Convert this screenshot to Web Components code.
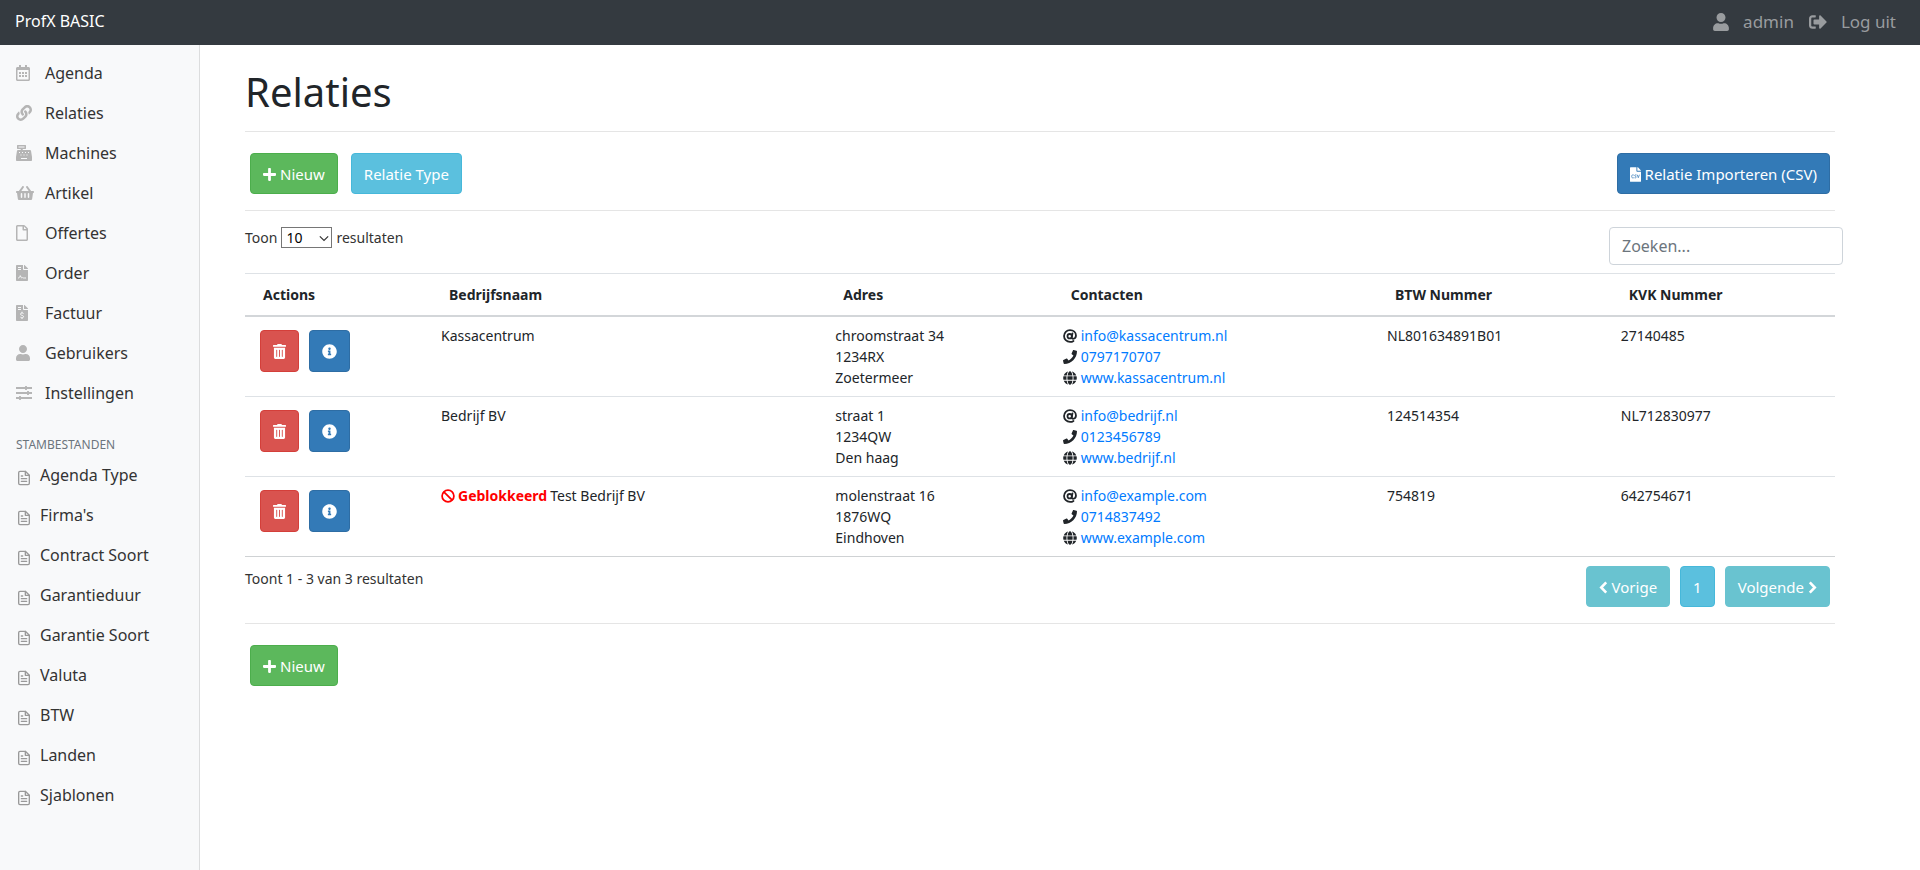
<!DOCTYPE html>
<html lang="nl">
<head>
<meta charset="utf-8">
<meta name="viewport" content="width=device-width, initial-scale=1">
<title>Relaties - ProfX BASIC</title>
<style>
  html, body { margin: 0; min-height: 100%; }
  body { font-family: "Noto Sans", "Open Sans", sans-serif; font-size: 14px; line-height: 21px; color: #212529; background: #fff; }
</style>
</head>
<body>
<px-shell>
  <px-navbar slot="top" brand="ProfX BASIC"></px-navbar>
  <px-sidebar slot="side">
    <px-nav-item icon="calendar">Agenda</px-nav-item>
    <px-nav-item icon="link">Relaties</px-nav-item>
    <px-nav-item icon="register">Machines</px-nav-item>
    <px-nav-item icon="basket">Artikel</px-nav-item>
    <px-nav-item icon="file">Offertes</px-nav-item>
    <px-nav-item icon="contract">Order</px-nav-item>
    <px-nav-item icon="invoice">Factuur</px-nav-item>
    <px-nav-item icon="user">Gebruikers</px-nav-item>
    <px-nav-item icon="sliders">Instellingen</px-nav-item>
    <px-nav-heading>STAMBESTANDEN</px-nav-heading>
    <px-nav-item icon="doc">Agenda Type</px-nav-item>
    <px-nav-item icon="doc">Firma's</px-nav-item>
    <px-nav-item icon="doc">Contract Soort</px-nav-item>
    <px-nav-item icon="doc">Garantieduur</px-nav-item>
    <px-nav-item icon="doc">Garantie Soort</px-nav-item>
    <px-nav-item icon="doc">Valuta</px-nav-item>
    <px-nav-item icon="doc">BTW</px-nav-item>
    <px-nav-item icon="doc">Landen</px-nav-item>
    <px-nav-item icon="doc">Sjablonen</px-nav-item>
  </px-sidebar>
  <px-title>Relaties</px-title>
  <px-toolbar>
    <px-button tone="success" icon="plus">Nieuw</px-button>
    <px-button tone="info">Relatie Type</px-button>
    <px-button slot="end" tone="primary" icon="csv">Relatie Importeren (CSV)</px-button>
  </px-toolbar>
  <px-table-controls></px-table-controls>
  <px-relations></px-relations>
  <px-pager>Toont 1 - 3 van 3 resultaten</px-pager>
  <px-toolbar last>
    <px-button tone="success" icon="plus">Nieuw</px-button>
  </px-toolbar>
</px-shell>

<script>
const sheet = 'M224 136V0H24C10.7 0 0 10.7 0 24v464c0 13.3 10.7 24 24 24h336c13.3 0 24-10.7 24-24V160H248c-13.2 0-24-10.8-24-24zm160-14.1v6.1H256V0h6.1c6.4 0 12.5 2.5 17 7l97.9 98c4.5 4.5 7 10.6 7 16.9z';
const key = (x, y) => `M${x} ${y}h32v32h-32z`;

// Each icon: [viewBox width, viewBox height, markup]
const ICONS = {
  user: [448, 512, '<path d="M224 256c70.7 0 128-57.3 128-128S294.7 0 224 0 96 57.3 96 128s57.3 128 128 128zm89.6 32h-16.7c-22.2 10.2-46.9 16-72.9 16s-50.6-5.8-72.9-16h-16.7C60.2 288 0 348.2 0 422.4V464c0 26.5 21.5 48 48 48h352c26.5 0 48-21.5 48-48v-41.6c0-74.2-60.2-134.4-134.4-134.4z"/>'],
  calendar: [448, 512, '<path d="M148 288h-40c-6.6 0-12-5.4-12-12v-40c0-6.6 5.4-12 12-12h40c6.6 0 12 5.4 12 12v40c0 6.6-5.4 12-12 12zm108-12v-40c0-6.6-5.4-12-12-12h-40c-6.6 0-12 5.4-12 12v40c0 6.6 5.4 12 12 12h40c6.6 0 12-5.4 12-12zm96 0v-40c0-6.6-5.4-12-12-12h-40c-6.6 0-12 5.4-12 12v40c0 6.6 5.4 12 12 12h40c6.6 0 12-5.4 12-12zm-96 96v-40c0-6.6-5.4-12-12-12h-40c-6.6 0-12 5.4-12 12v40c0 6.6 5.4 12 12 12h40c6.6 0 12-5.4 12-12zm-96 0v-40c0-6.6-5.4-12-12-12h-40c-6.6 0-12 5.4-12 12v40c0 6.6 5.4 12 12 12h40c6.6 0 12-5.4 12-12zm192 0v-40c0-6.6-5.4-12-12-12h-40c-6.6 0-12 5.4-12 12v40c0 6.6 5.4 12 12 12h40c6.6 0 12-5.4 12-12zm96-260v352c0 26.5-21.5 48-48 48H48c-26.5 0-48-21.5-48-48V112c0-26.5 21.5-48 48-48h48V12c0-6.6 5.4-12 12-12h40c6.6 0 12 5.4 12 12v52h128V12c0-6.6 5.4-12 12-12h40c6.6 0 12 5.4 12 12v52h48c26.5 0 48 21.5 48 48zm-48 346V160H48v298c0 3.3 2.7 6 6 6h340c3.3 0 6-2.7 6-6z"/>'],
  link: [512, 512, '<path d="M326.612 185.391c59.747 59.809 58.927 155.698.36 214.59-.11.12-.24.25-.36.37l-67.2 67.2c-59.27 59.27-155.699 59.262-214.96 0-59.27-59.26-59.27-155.7 0-214.96l37.106-37.106c9.84-9.84 26.786-3.3 27.294 10.606.648 17.722 3.826 35.527 9.69 52.721 1.986 5.822.567 12.262-3.783 16.612l-13.087 13.087c-28.026 28.026-28.905 73.66-1.155 101.96 28.024 28.579 74.086 28.749 102.325.51l67.2-67.19c28.191-28.191 28.073-73.757 0-101.83-3.701-3.694-7.429-6.564-10.341-8.569a16.037 16.037 0 0 1-6.947-12.606c-.396-10.567 3.348-21.456 11.698-29.806l21.054-21.055c5.521-5.521 14.182-6.199 20.584-1.731a152.482 152.482 0 0 1 20.522 17.197zM467.547 44.449c-59.261-59.262-155.69-59.27-214.96 0l-67.2 67.2c-.12.12-.25.25-.36.37-58.566 58.892-59.387 154.781.36 214.59a152.454 152.454 0 0 0 20.521 17.196c6.402 4.468 15.064 3.789 20.584-1.731l21.054-21.055c8.35-8.35 12.094-19.239 11.698-29.806a16.037 16.037 0 0 0-6.947-12.606c-2.912-2.005-6.64-4.875-10.341-8.569-28.073-28.073-28.191-73.639 0-101.83l67.2-67.19c28.239-28.239 74.3-28.069 102.325.51 27.75 28.3 26.872 73.934-1.155 101.96l-13.087 13.087c-4.35 4.35-5.769 10.79-3.783 16.612 5.864 17.194 9.042 34.999 9.69 52.721.509 13.906 17.454 20.446 27.294 10.606l37.106-37.106c59.271-59.259 59.271-155.699.001-214.959z"/>'],
  register: [512, 512, `<path fill-rule="evenodd" d="M48 0h256c9 0 16 7 16 16v96c0 9-7 16-16 16h-88v32h232c16 0 29 12 32 27l31 192c1 5 1 9 1 13v88c0 18-14 32-32 32H32c-18 0-32-14-32-32v-88c0-4 0-8 1-13l31-192c3-15 16-27 32-27h88v-32H48c-9 0-16-7-16-16V16C32 7 39 0 48 0zM80 48v32h192V48zM160 416v32h192v-32z${key(96,224)}${key(192,224)}${key(288,224)}${key(384,224)}${key(144,304)}${key(240,304)}${key(336,304)}"/>`],
  basket: [576, 512, '<path d="M576 216v16c0 13.255-10.745 24-24 24h-8l-26.113 182.788C514.509 462.435 494.257 480 470.37 480H105.63c-23.887 0-44.139-17.565-47.518-41.212L32 256h-8c-13.255 0-24-10.745-24-24v-16c0-13.255 10.745-24 24-24h67.341l106.78-146.821c10.395-14.292 30.407-17.453 44.701-7.058 14.293 10.395 17.453 30.408 7.058 44.701L170.477 192h235.046L326.12 82.821c-10.395-14.292-7.234-34.306 7.059-44.701 14.291-10.395 34.306-7.235 44.701 7.058L484.659 192H552c13.255 0 24 10.745 24 24zM312 392V280c0-13.255-10.745-24-24-24s-24 10.745-24 24v112c0 13.255 10.745 24 24 24s24-10.745 24-24zm112 0V280c0-13.255-10.745-24-24-24s-24 10.745-24 24v112c0 13.255 10.745 24 24 24s24-10.745 24-24zm-224 0V280c0-13.255-10.745-24-24-24s-24 10.745-24 24v112c0 13.255 10.745 24 24 24s24-10.745 24-24z"/>'],
  file: [384, 512, '<path d="M369.9 97.9L286 14C277 5 264.8-.1 252.1-.1H48C21.5 0 0 21.5 0 48v416c0 26.5 21.5 48 48 48h288c26.5 0 48-21.5 48-48V131.9c0-12.7-5.1-25-14.1-34zM332.1 128H256V51.9l76.1 76.1zM48 464V48h160v104c0 13.3 10.7 24 24 24h104v288H48z"/>'],
  contract: [384, 512, `<path d="${sheet}"/><g fill="none" stroke="var(--cut)" stroke-width="32"><path d="M64 80h96M64 144h96M64 416c40 0 54-20 72-76l36 68c14 16 30-14 44 0 8 8 20 8 104 8"/></g>`],
  invoice: [384, 512, `<path d="${sheet}"/><g fill="none" stroke="var(--cut)" stroke-width="32"><path d="M64 80h96M64 144h96M192 216v40M192 408v40M242 276c-16-16-36-20-56-20-54 0-54 60-8 72l30 8c48 14 44 72-10 72-24 0-40-6-56-18"/></g>`],
  csv: [384, 512, `<path d="${sheet}"/><g fill="none" stroke="var(--cut)" stroke-width="26"><path d="M132 274c-60-16-74 8-74 48s16 66 74 48M226 274c-70-22-80 34-32 46s22 68-38 50M252 264l38 104 38-104"/></g>`],
  sliders: [512, 512, '<path d="M0 64h288V48c0-9 7-16 16-16h32c9 0 16 7 16 16v16h160v64H352v16c0 9-7 16-16 16h-32c-9 0-16-7-16-16v-16H0zM0 224h352v-16c0-9 7-16 16-16h32c9 0 16 7 16 16v16h96v64h-96v16c0 9-7 16-16 16h-32c-9 0-16-7-16-16v-16H0zM0 384h96v-16c0-9 7-16 16-16h32c9 0 16 7 16 16v16h352v64H160v16c0 9-7 16-16 16h-32c-9 0-16-7-16-16v-16H0z"/>'],
  doc: [24, 24, '<g fill="none" stroke="currentColor" stroke-width="2" stroke-linecap="round" stroke-linejoin="round"><path d="M14 2H6a2 2 0 0 0-2 2v16a2 2 0 0 0 2 2h12a2 2 0 0 0 2-2V8z"/><path d="M14 2v6h6M16 13H8M16 17H8M10 9H8"/></g>'],
  signout: [512, 512, '<path d="M497 273L329 441c-15 15-41 4.5-41-17v-96H152c-13.3 0-24-10.7-24-24v-96c0-13.3 10.7-24 24-24h136V88c0-21.4 25.9-32 41-17l168 168c9.3 9.4 9.3 24.6 0 34zM192 436v-40c0-6.6-5.4-12-12-12H96c-17.7 0-32-14.3-32-32V160c0-17.7 14.3-32 32-32h84c6.6 0 12-5.4 12-12V76c0-6.6-5.4-12-12-12H96c-53 0-96 43-96 96v192c0 53 43 96 96 96h84c6.6 0 12-5.4 12-12z"/>'],
  plus: [448, 512, '<path d="M416 208H272V64c0-17.67-14.33-32-32-32h-32c-17.67 0-32 14.33-32 32v144H32c-17.67 0-32 14.33-32 32v32c0 17.67 14.33 32 32 32h144v144c0 17.67 14.33 32 32 32h32c17.67 0 32-14.33 32-32V304h144c17.67 0 32-14.33 32-32v-32c0-17.67-14.33-32-32-32z"/>'],
  trash: [448, 512, '<path d="M32 464a48 48 0 0 0 48 48h288a48 48 0 0 0 48-48V128H32zm272-256a16 16 0 0 1 32 0v224a16 16 0 0 1-32 0zm-96 0a16 16 0 0 1 32 0v224a16 16 0 0 1-32 0zm-96 0a16 16 0 0 1 32 0v224a16 16 0 0 1-32 0zM432 32H312l-9.4-18.7A24 24 0 0 0 281.1 0H166.8a23.72 23.72 0 0 0-21.4 13.3L136 32H16A16 16 0 0 0 0 48v32a16 16 0 0 0 16 16h416a16 16 0 0 0 16-16V48a16 16 0 0 0-16-16z"/>'],
  info: [512, 512, '<path d="M256 8C119.043 8 8 119.083 8 256c0 136.997 111.043 248 248 248s248-111.003 248-248C504 119.083 392.957 8 256 8zm0 110c23.196 0 42 18.804 42 42s-18.804 42-42 42-42-18.804-42-42 18.804-42 42-42zm56 254c0 6.627-5.373 12-12 12h-88c-6.627 0-12-5.373-12-12v-24c0-6.627 5.373-12 12-12h12v-64h-12c-6.627 0-12-5.373-12-12v-24c0-6.627 5.373-12 12-12h64c6.627 0 12 5.373 12 12v100h12c6.627 0 12 5.373 12 12v24z"/>'],
  ban: [512, 512, '<g fill="none" stroke="currentColor" stroke-width="64"><circle cx="256" cy="256" r="216"/><path d="M103 103l306 306"/></g>'],
  at: [512, 512, '<g fill="none" stroke="currentColor" stroke-width="66" stroke-linecap="round"><circle cx="244" cy="262" r="80"/><path d="M346 160l-26 140c-8 44 20 58 48 58 60 0 106-44 106-118C474 120 384 38 256 38 134 38 38 134 38 256s96 218 218 218c48 0 92-14 128-38"/></g>'],
  phone: [512, 512, '<path d="M493.4 24.6l-104-24c-11.3-2.6-22.9 3.3-27.5 13.9l-48 112c-4.2 9.8-1.4 21.3 6.9 28l60.6 49.6c-36 76.7-98.9 140.5-177.2 177.2l-49.6-60.6c-6.8-8.3-18.2-11.1-28-6.9l-112 48C3.9 366.5-2 378.1.6 389.4l24 104C27.1 504.2 36.7 512 48 512c256.1 0 464-207.5 464-464 0-11.2-7.7-20.9-18.6-23.4z"/>'],
  globe: [496, 512, '<path d="M336.5 160C322 70.7 287.8 8 248 8s-74 62.7-88.5 152h177zM152 256c0 22.2 1.2 43.5 3.3 64h185.3c2.1-20.5 3.3-41.8 3.3-64s-1.2-43.5-3.3-64H155.3c-2.1 20.5-3.3 41.8-3.3 64zm324.7-96c-28.6-67.9-86.5-120.4-158-141.6 24.4 33.8 41.2 84.7 50 141.6h108zM177.2 18.4C105.8 39.6 47.8 92.1 19.3 160h108c8.7-56.9 25.5-107.8 49.9-141.6zM487.4 192H372.7c2.1 21 3.3 42.5 3.3 64s-1.2 43-3.3 64h114.6c5.5-20.5 8.6-41.8 8.6-64s-3.1-43.5-8.5-64zM120 256c0-21.5 1.2-43 3.3-64H8.6C3.2 212.5 0 233.8 0 256s3.2 43.5 8.6 64h114.6c-2-21-3.2-42.5-3.2-64zm39.5 96c14.5 89.3 48.7 152 88.5 152s74-62.7 88.5-152h-177zm159.3 141.6c71.4-21.2 129.4-73.7 158-141.6h-108c-8.8 56.9-25.6 107.8-50 141.6zM19.3 352c28.6 67.9 86.5 120.4 158 141.6-24.4-33.8-41.2-84.7-50-141.6h-108z"/>'],
  left: [320, 512, '<path d="M256 76L80 256l176 180" fill="none" stroke="currentColor" stroke-width="92"/>'],
  right: [320, 512, '<path d="M64 76l176 180L64 436" fill="none" stroke="currentColor" stroke-width="92"/>'],
  caret: [12, 12, '<path d="M1 4l5 5 5-5" fill="none" stroke="currentColor" stroke-width="1.4"/>']
};

function define(name, render) {
  customElements.define(name, class extends HTMLElement {
    connectedCallback() {
      if (this.shadowRoot) return;
      const t = document.createElement('template');
      t.innerHTML = render(this);
      this.attachShadow({ mode: 'open' }).append(t.content.cloneNode(true));
    }
  });
}

define('px-icon', el => {
  const [w, h, body] = ICONS[el.getAttribute('name')];
  const size = Number(el.getAttribute('size') || 16);
  return `<style>
    :host { display: inline-flex; flex: none; }
    svg { display: block; fill: currentColor; }
  </style>
  <svg width="${Math.round(size * w / h)}" height="${size}" viewBox="0 0 ${w} ${h}" aria-hidden="true">${body}</svg>`;
});

define('px-shell', () => `<style>
    :host { display: flex; flex-direction: column; min-height: 100vh; }
    .body { display: flex; flex: 1; }
    main { flex: 1; min-width: 0; padding: 23px 85px 24px 45px; }
  </style>
  <slot name="top"></slot>
  <div class="body"><slot name="side"></slot><main><slot></slot></main></div>`);

define('px-navbar', el => `<style>
    :host { display: block; background: #343a40; }
    nav { display: flex; align-items: center; justify-content: space-between; height: 45px; padding: 0 24px 0 15px; }
    a { text-decoration: none; line-height: 24px; }
    .brand { color: #fff; font-size: 16px; padding-bottom: 4px; }
    .user { display: flex; align-items: center; gap: 15px; font-size: 17px; padding-bottom: 2px; }
    .user a { display: flex; align-items: center; gap: 14px; color: #999c9f; }
  </style>
  <nav aria-label="Account">
    <a class="brand" href="#">${el.getAttribute('brand')}</a>
    <div class="user">
      <a href="#"><px-icon name="user" size="18"></px-icon>admin</a>
      <a href="#"><px-icon name="signout" size="18"></px-icon>Log uit</a>
    </div>
  </nav>`);

define('px-sidebar', () => `<style>
    :host { display: block; box-sizing: border-box; flex: 0 0 200px; padding: 8px 0; background: #f8f9fa; border-right: 1px solid #dcddde; --cut: #f8f9fa; }
  </style>
  <nav aria-label="Menu"><slot></slot></nav>`);

define('px-nav-item', el => {
  const doc = el.getAttribute('icon') === 'doc';
  return `<style>
    :host { display: block; }
    a { display: flex; align-items: center; height: 40px; padding: 0 16px; box-sizing: border-box; color: #333; font-size: 16px; line-height: 24px; text-decoration: none; }
    .mark { display: flex; width: ${doc ? 24 : 29}px; color: ${doc ? '#999; padding-top: 6px' : '#b5b5b5'}; }
  </style>
  <a href="#"><span class="mark"><px-icon name="${el.getAttribute('icon')}"></px-icon></span><slot></slot></a>`;
});

define('px-nav-heading', () => `<style>
    :host { display: block; padding: 22px 16px 1px; color: #6c757d; font-size: 12px; line-height: 19px; }
    h2 { margin: 0; font: inherit; }
  </style><h2><slot></slot></h2>`);

define('px-title', () => `<style>
    :host { display: block; padding-bottom: 15px; border-bottom: 1px solid #e5e5e5; }
    h1 { margin: 0; font-size: 40px; line-height: 48px; font-weight: 400; }
  </style><h1><slot></slot></h1>`);

define('px-toolbar', () => `<style>
    :host { display: flex; justify-content: space-between; padding: 21px 5px 16px; border-bottom: 1px solid #e5e5e5; }
    :host([last]) { border: 0; }
    div { display: flex; gap: 13px; }
  </style><div><slot></slot></div><div><slot name="end"></slot></div>`);

define('px-button', el => {
  const icon = el.getAttribute('icon'), after = el.getAttribute('icon-after');
  const [bg, edge] = {
    success: ['#5cb85c', '#4cae4c'], info: ['#5bc0de', '#46b8da'], primary: ['#337ab7', '#2e6da4'],
    danger: ['#d9534f', '#d43f3a'], muted: ['#69c3d0', '#69c3d0']
  }[el.getAttribute('tone')];
  const label = el.getAttribute('label');
  return `<style>
    :host { display: inline-block; --cut: ${bg}; }
    button { display: flex; align-items: center; gap: 4px; margin: 0; padding: ${label ? '8px 12px' : '9px 12px 7px'}; font-family: inherit; font-size: 15px; line-height: ${label ? 24 : 23}px; min-height: ${label ? 42 : 41}px; color: #fff; background: ${bg}; border: 1px solid ${edge}; border-radius: 4px; cursor: pointer; }
  </style>
  <button type="button"${label ? ` aria-label="${label}"` : ''}>${icon ? `<px-icon name="${icon}" size="15"></px-icon>` : ''}<slot></slot>${after ? `<px-icon name="${after}" size="15"></px-icon>` : ''}</button>`;
});

define('px-table-controls', () => `<style>
    :host { display: flex; justify-content: space-between; align-items: flex-start; padding: 16px 0 8px; color: #333; }
    label { display: flex; align-items: center; gap: 4px; }
    .pick { position: relative; display: flex; color: #333; }
    select { appearance: none; width: 51px; height: 21px; margin: 0; padding: 0 4px; font-family: inherit; font-size: 14px; line-height: 19px; color: #000; background: #fff; border: 1px solid #767676; border-radius: 0; }
    .pick px-icon { position: absolute; right: 3px; top: 6px; pointer-events: none; }
    input { box-sizing: border-box; width: 234px; height: 38px; margin: 0 -8px 0 0; padding: 6px 12px; font-family: inherit; font-size: 16px; line-height: 24px; color: #495057; background: #fff; border: 1px solid #ced4da; border-radius: 4px; }
    input::placeholder { color: #6c757d; opacity: 1; }
  </style>
  <label>Toon <span class="pick"><select><option>10</option><option>25</option><option>50</option><option>100</option></select><px-icon name="caret" size="10"></px-icon></span> resultaten</label>
  <input type="search" placeholder="Zoeken..." aria-label="Zoeken">`);

const relations = [
  { name: 'Kassacentrum', address: ['chroomstraat 34', '1234RX', 'Zoetermeer'], mail: 'info@kassacentrum.nl', phone: '0797170707', site: 'www.kassacentrum.nl', vat: 'NL801634891B01', kvk: '27140485' },
  { name: 'Bedrijf BV', address: ['straat 1', '1234QW', 'Den haag'], mail: 'info@bedrijf.nl', phone: '0123456789', site: 'www.bedrijf.nl', vat: '124514354', kvk: 'NL712830977' },
  { name: 'Test Bedrijf BV', blocked: true, address: ['molenstraat 16', '1876WQ', 'Eindhoven'], mail: 'info@example.com', phone: '0714837492', site: 'www.example.com', vat: '754819', kvk: '642754671' }
];

define('px-contact', el => `<style>
    :host { display: flex; align-items: center; gap: 4px; }
    a { color: #007bff; text-decoration: none; }
  </style><px-icon name="${el.getAttribute('icon')}" size="14"></px-icon><a href="${el.getAttribute('to')}"><slot></slot></a>`);

define('px-relations', () => `<style>
    :host { display: block; }
    table { width: 100%; table-layout: fixed; border-collapse: separate; border-spacing: 0; border-bottom: 1px solid #cfd2d4; }
    th { padding: 10px 18px; text-align: left; font-weight: 700; line-height: 21px; border-top: 1px solid #dee2e6; border-bottom: 2px solid #d3d6d9; }
    td { padding: 8px 10px; vertical-align: top; }
    tr + tr td { border-top: 1px solid #dee2e6; }
    .actions { display: flex; gap: 10px; padding: 5px; }
    .blocked { color: #f00; }
    .name { display: flex; align-items: center; gap: 3px; }
    .c1 { width: 11.7%; } .c2 { width: 24.8%; } .c3 { width: 14.3%; }
    .c4 { width: 20.4%; } .c5 { width: 14.7%; }
  </style>
  <table>
    <colgroup><col class="c1"><col class="c2"><col class="c3"><col class="c4"><col class="c5"><col></colgroup>
    <thead><tr><th>Actions</th><th>Bedrijfsnaam</th><th>Adres</th><th>Contacten</th><th>BTW Nummer</th><th>KVK Nummer</th></tr></thead>
    <tbody>${relations.map(r => `<tr>
      <td><div class="actions"><px-button tone="danger" icon="trash" label="Verwijderen"></px-button><px-button tone="primary" icon="info" label="Details"></px-button></div></td>
      <td><div class="name">${r.blocked ? '<px-icon class="blocked" name="ban" size="14"></px-icon><b class="blocked">Geblokkeerd</b>' : ''}<span>${r.name}</span></div></td>
      <td>${r.address.join('<br>')}</td>
      <td><px-contact icon="at" to="mailto:${r.mail}">${r.mail}</px-contact><px-contact icon="phone" to="tel:${r.phone}">${r.phone}</px-contact><px-contact icon="globe" to="#">${r.site}</px-contact></td>
      <td>${r.vat}</td><td>${r.kvk}</td></tr>`).join('')}</tbody>
  </table>`);

define('px-pager', () => `<style>
    :host { display: flex; justify-content: space-between; align-items: flex-start; padding: 9px 0 16px; color: #333; border-bottom: 1px solid #e5e5e5; }
    p { margin: 0; padding-top: 2px; }
    nav { display: flex; gap: 10px; padding-right: 5px; }
  </style>
  <p><slot></slot></p>
  <nav aria-label="Paginering">
    <px-button tone="muted" icon="left">Vorige</px-button>
    <px-button tone="info">1</px-button>
    <px-button tone="muted" icon-after="right">Volgende</px-button>
  </nav>`);
</script>
</body>
</html>
